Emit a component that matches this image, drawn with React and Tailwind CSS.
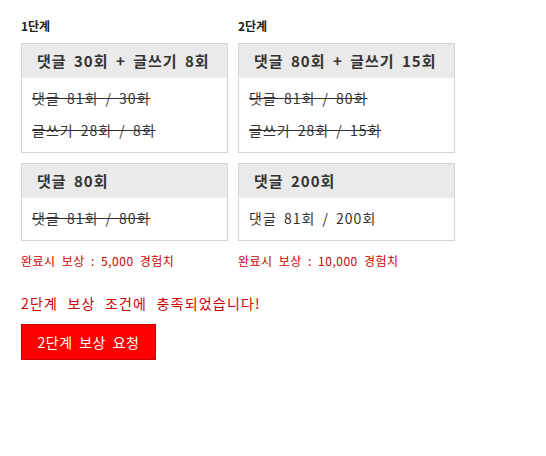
import React from 'react';

const stages = [
  {
    label: '1단계',
    width: 'w-[207px]',
    boxes: [
      {
        title: '댓글 30회 + 글쓰기 8회',
        lines: [
          { text: '댓글 81회 / 30회', done: true },
          { text: '글쓰기 28회 / 8회', done: true },
        ],
      },
      {
        title: '댓글 80회',
        lines: [{ text: '댓글 81회 / 80회', done: true }],
      },
    ],
    reward: '완료시 보상 : 5,000 경험치',
  },
  {
    label: '2단계',
    width: 'w-[217px]',
    boxes: [
      {
        title: '댓글 80회 + 글쓰기 15회',
        lines: [
          { text: '댓글 81회 / 80회', done: true },
          { text: '글쓰기 28회 / 15회', done: true },
        ],
      },
      {
        title: '댓글 200회',
        lines: [{ text: '댓글 81회 / 200회', done: false }],
      },
    ],
    reward: '완료시 보상 : 10,000 경험치',
  },
];

const MissionBox = ({ box }) => (
  <div className="border border-[#d5d5d5] bg-white">
    <div className="h-[34px] bg-[#eaeaea] pl-[15px] text-[15px] font-bold leading-[34px] text-[#333] tracking-[1px] [word-spacing:3px]">
      {box.title}
    </div>
    <div className="pl-[10px] pt-1 pb-[6px]">
      {box.lines.map((line) => (
        <div
          key={line.text}
          className={`text-[14px] leading-[32px] text-[#333] tracking-[1px] [word-spacing:3px] ${line.done ? 'line-through' : ''}`}
        >
          {line.text}
        </div>
      ))}
    </div>
  </div>
);

const App = () => {
  return (
    <div
      className="min-h-screen bg-white pl-[21px] pt-[17px]"
      style={{ fontFamily: '"Noto Sans CJK KR", "Noto Sans", sans-serif' }}
    >
      <div className="flex gap-[10px]">
        {stages.map((stage) => (
          <div key={stage.label} className={stage.width}>
            <div className="mb-2 text-[12px] font-bold leading-[18px] text-[#222]">
              {stage.label}
            </div>
            <div className="flex flex-col gap-[10px]">
              {stage.boxes.map((box) => (
                <MissionBox key={box.title} box={box} />
              ))}
            </div>
            <div className="mt-[11px] text-[12px] leading-[18px] text-[#cc0000] tracking-[0.5px] [word-spacing:3px]">
              {stage.reward}
            </div>
          </div>
        ))}
      </div>
      <p className="mt-[23px] text-[14px] leading-[20px] text-[#cc0000] tracking-[1.2px] [word-spacing:5px]">
        2단계 보상 조건에 충족되었습니다!
      </p>
      <button
        type="button"
        className="mt-[11px] h-[36px] w-[135px] border border-[#cc0000] bg-[#ff0000] text-[14px] text-white tracking-[0.5px] [word-spacing:3px]"
      >
        2단계 보상 요청
      </button>
    </div>
  );
};

export default App;
